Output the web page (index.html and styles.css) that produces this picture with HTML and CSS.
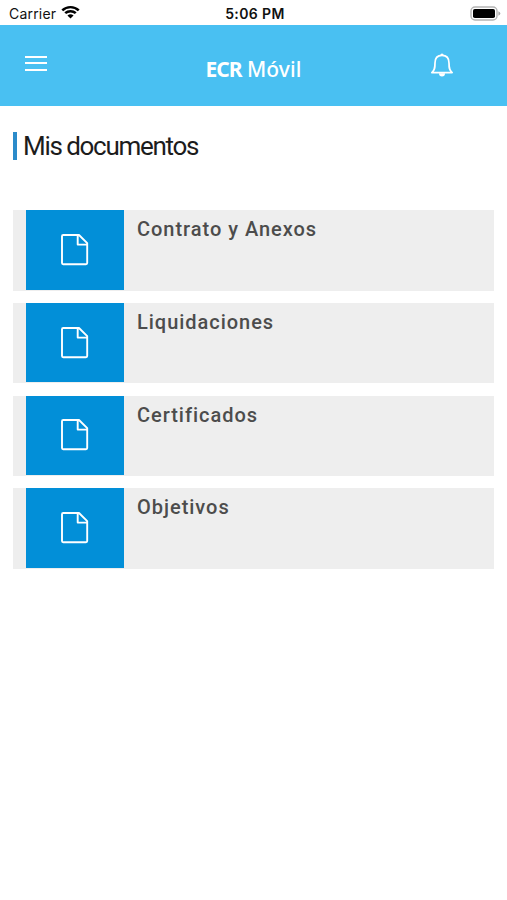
FILE: index.html
```html
<!DOCTYPE html>
<html lang="es">
<head>
  <meta charset="UTF-8">
  <title>ECR Móvil - Mis documentos</title>
  <meta name="viewport" content="width=device-width, initial-scale=1.0">
  <link rel="stylesheet" href="styles.css">
</head>
<body>

<div class="status-bar">
  <div class="carrier">
    <span>Carrier</span>
    <svg class="wifi" viewBox="0 0 18 14" width="19" height="14" preserveAspectRatio="none">
      <path d="M1.2 5.3a11.2 11.2 0 0 1 15.6 0M4 8.2a7.2 7.2 0 0 1 10 0" fill="none" stroke="#000" stroke-width="2.4"/>
      <path d="M9 13.6L6.1 10.6a4.2 4.2 0 0 1 5.8 0z"/>
    </svg>
  </div>
  <div class="time">5:06 PM</div>
  <div class="battery">
    <svg viewBox="0 0 31 15" width="31" height="15">
      <rect x="1" y="1" width="26" height="13" rx="4" fill="#fff" stroke="#b4b4b4" stroke-width="1.4"/>
      <rect x="3" y="3" width="22" height="9" rx="1.8"/>
      <path d="M28.4 5.2q1.9.9 1.9 2.3t-1.9 2.3z" fill="#a8a8a8"/>
    </svg>
  </div>
</div>

<header>
  <a href="#" class="menu" aria-label="Menú">
    <span></span>
    <span></span>
    <span></span>
  </a>
  <div class="logo"><b>ECR</b> <span>Móvil</span></div>
  <a href="#" class="bell" aria-label="Notificaciones">
    <svg viewBox="0 0 24 26" width="24" height="26">
      <path d="M1.8 20.6C4.7 18.4 5 16 5 11c0-5 2.6-7.6 7-7.6s7 2.6 7 7.6c0 5 .3 7.4 3.2 9.6z" fill="none" stroke="#fff" stroke-width="1.7" stroke-linejoin="round"/>
      <path d="M10.3 3.4a1.7 1.9 0 0 1 3.4 0zM9 21.3h6a3 3.3 0 0 1-6 0z" fill="#fff"/>
    </svg>
  </a>
</header>

<main>
  <h1>Mis documentos</h1>

  <div class="documents">
    <a href="#" class="document">
      <div class="icon">
        <svg viewBox="0 0 28 32" width="28" height="32"><path d="M2.2 1H18l8.2 8.2V29a1.2 1.2 0 0 1-1.2 1.2H2.2A1.2 1.2 0 0 1 1 29V2.2A1.2 1.2 0 0 1 2.2 1zM16.7 1v9.6h9.5"/></svg>
      </div>
      <h2>Contrato y Anexos</h2>
    </a>
    <a href="#" class="document">
      <div class="icon">
        <svg viewBox="0 0 28 32" width="28" height="32"><path d="M2.2 1H18l8.2 8.2V29a1.2 1.2 0 0 1-1.2 1.2H2.2A1.2 1.2 0 0 1 1 29V2.2A1.2 1.2 0 0 1 2.2 1zM16.7 1v9.6h9.5"/></svg>
      </div>
      <h2>Liquidaciones</h2>
    </a>
    <a href="#" class="document">
      <div class="icon">
        <svg viewBox="0 0 28 32" width="28" height="32"><path d="M2.2 1H18l8.2 8.2V29a1.2 1.2 0 0 1-1.2 1.2H2.2A1.2 1.2 0 0 1 1 29V2.2A1.2 1.2 0 0 1 2.2 1zM16.7 1v9.6h9.5"/></svg>
      </div>
      <h2>Certificados</h2>
    </a>
    <a href="#" class="document">
      <div class="icon">
        <svg viewBox="0 0 28 32" width="28" height="32"><path d="M2.2 1H18l8.2 8.2V29a1.2 1.2 0 0 1-1.2 1.2H2.2A1.2 1.2 0 0 1 1 29V2.2A1.2 1.2 0 0 1 2.2 1zM16.7 1v9.6h9.5"/></svg>
      </div>
      <h2>Objetivos</h2>
    </a>
  </div>
</main>

</body>
</html>
```
FILE: styles.css
```css
:root {
  --header: #49c0f2;
  --accent: #028fd8;
  --card: #eeeeee;
}

* {
  margin: 0;
  padding: 0;
  box-sizing: border-box;
}

body {
  font-family: Roboto, sans-serif;
  background: #fff;
  color: #1c1c1c;
}

a {
  color: inherit;
  text-decoration: none;
}

svg {
  display: block;
}

/* Barra de estado */
.status-bar {
  display: grid;
  grid-template-columns: 1fr auto 1fr;
  align-items: center;
  height: 25px;
  padding: 1px 6px 0 9px;
  font-family: Inter, sans-serif;
  font-size: 14px;
  color: #111;
}

.carrier {
  display: flex;
  align-items: center;
  gap: 5px;
  letter-spacing: 0.2px;
}

.wifi {
  margin-top: -2px;
}

.time {
  padding-top: 1px;
  font-weight: 600;
  font-size: 14px;
  letter-spacing: 0.4px;
}

.battery {
  justify-self: end;
}

/* Cabecera */
header {
  display: grid;
  grid-template-columns: 1fr auto 1fr;
  height: 81px;
  padding: 0 25px;
  background: var(--header);
  color: #fff;
}

.menu {
  display: flex;
  flex-direction: column;
  gap: 4.5px;
  width: 22px;
  padding-top: 30.5px;
}

.menu span {
  height: 2px;
  background: #fff;
}

.logo {
  padding-top: 30px;
  font-family: "Noto Sans", sans-serif;
  font-size: 21px;
  line-height: 28px;
}

.logo b {
  letter-spacing: -1px;
}

.logo span {
  font-weight: 500;
  letter-spacing: 0.1px;
}

.bell {
  justify-self: end;
  margin-right: 28px;
  padding-top: 27px;
}

/* Contenido */
main {
  padding: 26px 13px 0;
}

h1 {
  height: 28px;
  padding-left: 6px;
  border-left: 4px solid #2b8bca;
  font-size: 26px;
  font-weight: 400;
  line-height: 28px;
  letter-spacing: -1.3px;
  word-spacing: -0.5px;
}

.documents {
  display: flex;
  flex-direction: column;
  gap: 12.3px;
  margin-top: 50px;
}

.document {
  display: flex;
  align-items: flex-start;
  height: 80.5px;
  padding-left: 13px;
  background: var(--card);
}

.icon {
  display: flex;
  align-items: center;
  justify-content: center;
  width: 97.5px;
  height: 79.5px;
  background: var(--accent);
}

.icon path {
  fill: none;
  stroke: #fff;
  stroke-width: 1.9;
  stroke-linejoin: round;
}

h2 {
  padding: 7px 0 0 13.5px;
  font-size: 20px;
  font-weight: 500;
  line-height: 24px;
  letter-spacing: 0.97px;
  color: #4c4c4c;
}
```
